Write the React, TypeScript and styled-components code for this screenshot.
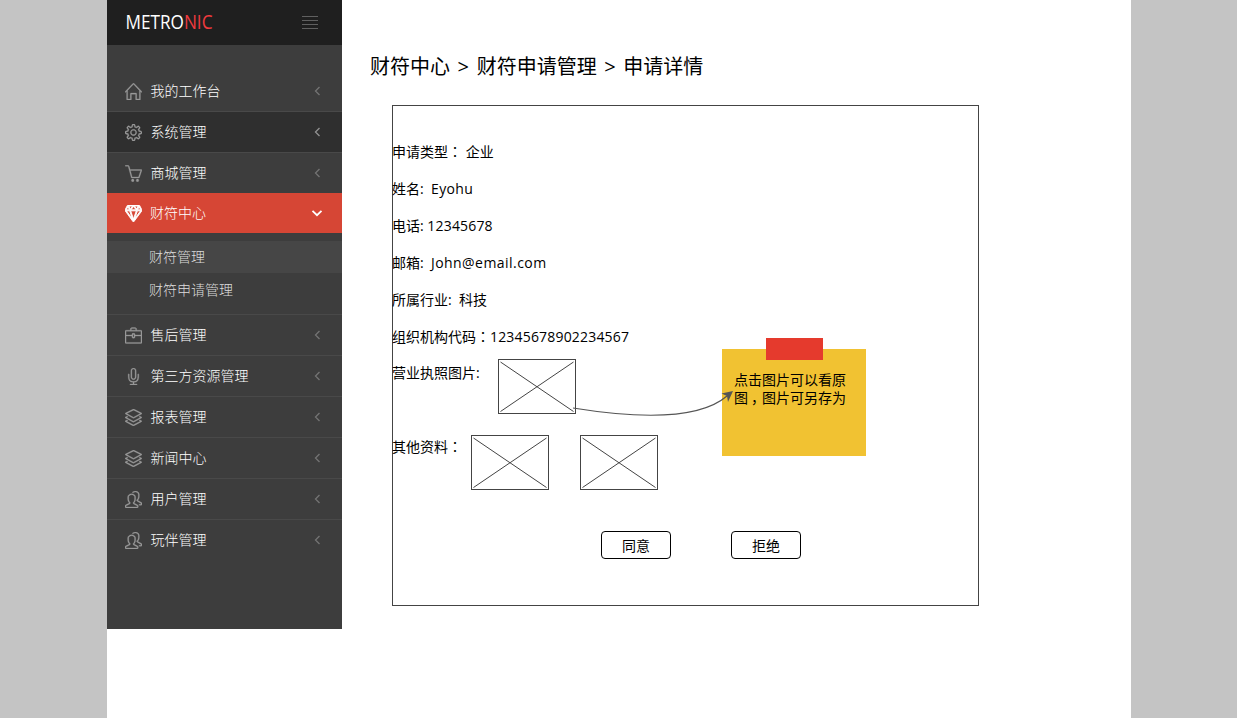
import React from 'react';
import styled, { createGlobalStyle, css } from 'styled-components';
import { SlHome, SlSettings, SlBasket, SlDiamond, SlBriefcase, SlMicrophone, SlLayers, SlPeople } from 'react-icons/sl';
import type { IconType } from 'react-icons';

const GlobalStyle = createGlobalStyle`
  * { box-sizing: border-box; }
  body {
    margin: 0;
    background: #c4c4c4;
    font-family: "Open Sans", "Noto Sans CJK SC", sans-serif;
    font-size: 14px;
    color: #000;
    overflow: hidden;
  }
`;

const Page = styled.div`
  display: flex;
  align-items: flex-start;
  width: 1024px;
  height: 718px;
  margin-left: 107px;
  background: #fff;
`;

const Sidebar = styled.nav`
  width: 235px;
  height: 629px;
  flex: none;
  background: #3d3d3d;
`;

const Brand = styled.header`
  display: flex;
  align-items: center;
  justify-content: space-between;
  height: 45px;
  padding: 0 24px 0 18px;
  background: #1f1f1f;
`;

const Logo = styled.svg`
  width: 92px;
  height: 34px;
  font-family: "Open Sans", sans-serif;
  font-size: 19.5px;
  fill: #fff;
  tspan { fill: #f03a3e; }
`;

const Toggler = styled.div`
  display: grid;
  gap: 3px;
  width: 16px;
  span { height: 1px; background: #606060; }
`;

const Menu = styled.div`
  padding-top: 25px;
`;

const MenuItem = styled.div<{ $state?: 'hover' | 'active'; $first?: boolean }>`
  display: flex;
  align-items: center;
  height: 41px;
  padding: 0 19px 0 17.5px;
  border-top: 1px solid ${p => (p.$first ? 'transparent' : '#494949')};
  color: #fff;
  ${p => p.$state === 'hover' && css`background: #2f2f2f;`}
  ${p => p.$state === 'active' && css`
    height: 40px;
    border-top: 0;
    background: #d64635;
    color: #fff;
  `}
`;

const IconSlot = styled.span<{ $active?: boolean }>`
  display: flex;
  width: 17px;
  height: 17px;
  margin-right: 8.5px;
  color: ${p => (p.$active ? '#fff' : '#999')};
  svg { width: 17px; height: 17px; stroke: currentColor; stroke-width: ${p => (p.$active ? 55 : 18)}; }
`;

const MenuText = styled.span<{ $active?: boolean }>`
  flex: 1;
  padding-left: ${p => (p.$active ? 0 : 0.5)}px;
  font-weight: 300;
  line-height: 20px;
`;

const Chevron = styled.svg<{ $tone: string }>`
  width: 12px;
  height: 12px;
  fill: none;
  stroke: ${p => p.$tone};
`;

const SubMenu = styled.div`
  height: 81px;
  padding-top: 8px;
`;

const SubItem = styled.div<{ $hover?: boolean }>`
  height: 33px;
  padding-left: 42px;
  line-height: 33px;
  font-weight: 300;
  color: #dcdcdc;
  ${p => p.$hover && css`
    height: 32px;
    line-height: 31px;
    background: #464646;
  `}
`;

const Main = styled.main`
  padding: 51px 0 0 28px;
`;

const Breadcrumb = styled.h1`
  margin: 0 0 22px;
  font-size: 20px;
  font-weight: 400;
  line-height: 32px;
  word-spacing: 2.4px;
  white-space: pre;
`;

const Panel = styled.section`
  position: relative;
  width: 587px;
  height: 501px;
  margin-left: 22px;
  padding-top: 27px;
  border: 1px solid #444;
`;

const Field = styled.div`
  display: flex;
  height: 37px;
  margin-left: -1px;
  line-height: 37px;
  white-space: pre;
`;

const WideColon = styled.span`
  font-family: "Noto Sans CJK TC", sans-serif;
`;

const Latin = styled.span<{ $track?: number }>`
  letter-spacing: ${p => p.$track ?? 0.18}px;
`;

const PhotoField = styled(Field)<{ $height: number }>`
  height: ${p => p.$height}px;
  line-height: 35px;
`;

const Photos = styled.div<{ $left: number; $top: number }>`
  display: flex;
  gap: 31px;
  padding: ${p => p.$top}px 0 0 ${p => p.$left}px;
`;

const Frame = styled.svg`
  display: block;
  width: 78px;
  height: 55px;
  fill: none;
  stroke: #444;
`;

const Actions = styled.div`
  display: flex;
  gap: 60px;
  padding: 23px 0 0 208px;
`;

const Button = styled.button`
  width: 70px;
  height: 28px;
  padding: 0;
  border: 1px solid #000;
  border-radius: 4px;
  background: #fff;
  font: inherit;
  line-height: 27px;
  color: #000;
`;

const Note = styled.aside`
  position: absolute;
  left: 329px;
  top: 243px;
  width: 144px;
  height: 107px;
  padding: 22px 12px;
  background: #f1c232;
  line-height: 18px;
`;

const Tape = styled.span`
  position: absolute;
  left: 43.5px;
  top: -11px;
  width: 57px;
  height: 22px;
  background: #e53a2d;
`;

const Comma = styled.span`
  display: inline-block;
  width: 14px;
  height: 18px;
  vertical-align: top;
  text-indent: 3px;
`;

const Arrow = styled.svg`
  position: absolute;
  left: 177px;
  top: 279px;
  width: 170px;
  height: 36px;
`;

type Entry = { icon: IconType; text: string; state?: 'hover' | 'active' };

const before: Entry[] = [
  { icon: SlHome, text: '我的工作台' },
  { icon: SlSettings, text: '系统管理', state: 'hover' },
  { icon: SlBasket, text: '商城管理' },
  { icon: SlDiamond, text: '财符中心', state: 'active' },
];

const after: Entry[] = [
  { icon: SlBriefcase, text: '售后管理' },
  { icon: SlMicrophone, text: '第三方资源管理' },
  { icon: SlLayers, text: '报表管理' },
  { icon: SlLayers, text: '新闻中心' },
  { icon: SlPeople, text: '用户管理' },
  { icon: SlPeople, text: '玩伴管理' },
];

function Row({ icon: Icon, text, state, first }: Entry & { first?: boolean }) {
  const active = state === 'active';
  return (
    <MenuItem $state={state} $first={first}>
      <IconSlot $active={active}><Icon /></IconSlot>
      <MenuText $active={active}>{text}</MenuText>
      <Chevron $tone={active ? '#fff' : state === 'hover' ? '#929292' : '#747474'} viewBox="0 0 12 12">
        {active
          ? <path d="M1.5 3.8 6 8.2 10.5 3.8" strokeWidth="1.8" />
          : <path d="M8.5 2 4.5 6 8.5 10" strokeWidth="1.3" />}
      </Chevron>
    </MenuItem>
  );
}

function Placeholder() {
  return (
    <Frame viewBox="0 0 78 55">
      <rect x="0.5" y="0.5" width="77" height="54" />
      <path d="M2.5 3 75.5 52.5M75.5 3 2.5 52.5" />
    </Frame>
  );
}

export default function App() {
  return (
    <>
      <GlobalStyle />
      <Page>
        <Sidebar>
          <Brand>
            <Logo viewBox="0 0 92 34">
              <text x="0.5" y="22.8" textLength="87" lengthAdjust="spacingAndGlyphs">METRO<tspan>NIC</tspan></text>
            </Logo>
            <Toggler><span /><span /><span /><span /></Toggler>
          </Brand>
          <Menu>
            {before.map((e, i) => <Row key={e.text} {...e} first={i === 0} />)}
            <SubMenu>
              <SubItem $hover>财符管理</SubItem>
              <SubItem>财符申请管理</SubItem>
            </SubMenu>
            {after.map(e => <Row key={e.text} {...e} />)}
          </Menu>
        </Sidebar>
        <Main>
          <Breadcrumb>{'财符中心 > 财符申请管理 > 申请详情'}</Breadcrumb>
          <Panel>
            <Field>申请类型<WideColon>：</WideColon>{' 企业'}</Field>
            <Field>{'姓名:  '}<Latin $track={0.4}>Eyohu</Latin></Field>
            <Field>{'电话: '}<Latin>12345678</Latin></Field>
            <Field>{'邮箱:  '}<Latin $track={0.45}>John@email.com</Latin></Field>
            <Field>{'所属行业:  科技'}</Field>
            <Field>组织机构代码<WideColon>：</WideColon><Latin>12345678902234567</Latin></Field>
            <PhotoField $height={74}>
              营业执照图片:
              <Photos $left={18} $top={4}><Placeholder /></Photos>
            </PhotoField>
            <PhotoField $height={79}>
              其他资料<WideColon>：</WideColon>
              <Photos $left={9} $top={6}><Placeholder /><Placeholder /></Photos>
            </PhotoField>
            <Actions>
              <Button>同意</Button>
              <Button>拒绝</Button>
            </Actions>
            <Note>
              <Tape />
              点击图片可以看原图<Comma>，</Comma>图片可另存为
            </Note>
            <Arrow viewBox="0 0 170 36" fill="none">
              <path d="M3 23C65 33 128 36 157 11" stroke="#555" strokeWidth="1.2" />
              <path d="M163 6 151.5 8.5 157 11 158 17Z" fill="#555" />
            </Arrow>
          </Panel>
        </Main>
      </Page>
    </>
  );
}
